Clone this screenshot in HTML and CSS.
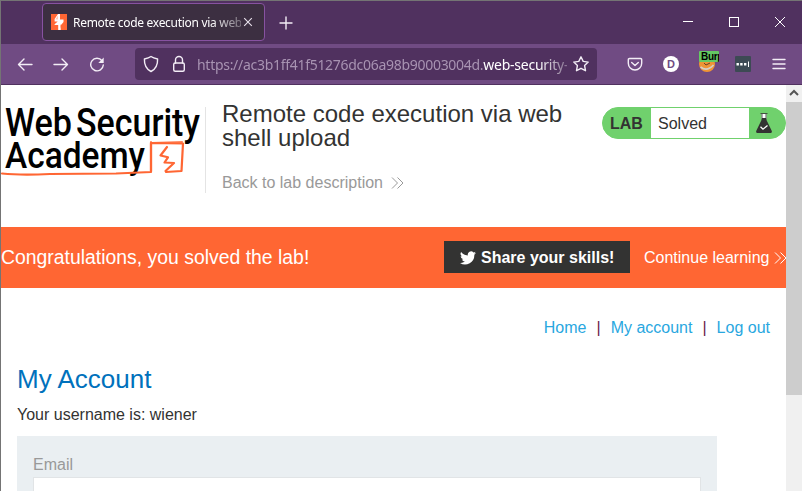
FILE: index.html
```html
<!DOCTYPE html>
<html lang="en">
<head>
<meta charset="utf-8">
<title>Remote code execution via web shell upload</title>
<link rel="stylesheet" href="styles.css">
</head>
<body>
<div class="window">
  <header class="tabbar">
    <div class="tab">
      <svg class="favicon" viewBox="0 0 16 16"><path fill="#f63" d="M0 0h16v16H0z"/><path fill="#fff" d="M7 0h2v5.500h3.500V8L9.700 11.400V16H7.200v-5H3.600v-.700L6.700 7.500H3.600V5z"/><path fill="#f63" d="M7 1.500v4H4.300zM9 14.500v-4h2.700z" opacity=".35"/></svg>
      <span class="tab-title">Remote code execution via web</span>
      <svg class="tab-close" viewBox="0 0 10 10"><path d="M1.200 1.200l7.600 7.600M8.800 1.200L1.200 8.800"/></svg>
    </div>
    <svg class="new-tab line" viewBox="0 0 14 14"><path d="M7 1v12M1 7h12"/></svg>
    <div class="window-buttons">
      <svg class="crisp" viewBox="0 0 12 12"><path d="M1 5.500h10"/></svg>
      <svg class="crisp" viewBox="0 0 12 12"><path d="M1.500 1.500h9v9h-9z"/></svg>
      <svg viewBox="0 0 12 12"><path d="M1 1l10 10M11 1L1 11"/></svg>
    </div>
  </header>
  <nav class="toolbar">
    <div class="nav-buttons">
      <svg class="line" viewBox="0 0 16 16"><path d="M15 8.500H1.500M7 3L1.500 8.500 7 14"/></svg>
      <svg class="line" viewBox="0 0 16 16"><path d="M1 8.500h13.500M9 3l5.500 5.500L9 14"/></svg>
      <svg class="line" viewBox="0 0 16 16"><path d="M13 4.700A6.300 6.300 0 1 0 14.300 9"/><path class="solid" d="M14.700 1.500V7H9.300z"/></svg>
    </div>
    <div class="urlbar">
      <svg class="shield line" viewBox="0 0 16 18"><path d="M8 1.500C6 3 4 3.500 1.400 4 1.200 9.500 3 14 8 16.500 13 14 14.800 9.500 14.600 4 12 3.500 10 3 8 1.500z"/></svg>
      <svg class="lock line" viewBox="0 0 14 18"><rect x="1.700" y="8" width="10.600" height="8.300" rx="1.500"/><path d="M3.500 8V5a3.500 3.500 0 0 1 7 0v3"/></svg>
      <span class="url">https://ac3b1ff41f51276dc06a98b90003004d.<b>web-security-</b></span>
      <svg class="star line" viewBox="0 0 18 18"><path d="M9 1.800l2.200 4.600 5 .700-3.600 3.500.900 5.100L9 13.300l-4.500 2.400.900-5.100L1.800 7.100l5-.700z"/></svg>
    </div>
    <div class="extensions">
      <svg class="line" viewBox="0 0 16 16"><path d="M2.500 2.500h11a1.200 1.200 0 0 1 1.200 1.200v3.600a6.700 6.700 0 0 1-13.400 0V3.700a1.200 1.200 0 0 1 1.200-1.200z"/><path d="M4.700 6.500L8 9.500l3.300-3"/></svg>
      <span class="profile">D</span>
      <span class="burp"><svg viewBox="0 0 16 16"><circle cx="8" cy="8" r="8" fill="#ef9435"/><path d="M1.500 11Q8 16 14.500 9" fill="none" stroke="#d5cec7" stroke-width="1.800"/><path d="M5 7l2 2 4-2" fill="none" stroke="#694026"/></svg><span class="badge">Burp</span></span>
      <svg class="password" viewBox="0 0 16 16"><rect width="16" height="16" rx="1" fill="#3d4a54"/><path fill="#fff" d="M1.500 7h2.400v2.400H1.500zM5.200 7h2.400v2.400H5.200zM9 7h2.400v2.400H9zM13 5.500h1v5.500h-1z"/></svg>
      <svg class="line" viewBox="0 0 16 16"><path d="M2 3.500h12M2 8h12M2 12.500h12"/></svg>
    </div>
  </nav>
  <div class="viewport">
    <main class="page">
      <section class="lab-header">
        <svg class="logo" viewBox="0 0 200 84" role="img" aria-label="Web Security Academy">
          <g class="logo-text">
            <text class="logo-top" x="4" y="33.700" textLength="67" lengthAdjust="spacingAndGlyphs">Web</text>
            <text class="logo-top" x="75" y="33.700" textLength="124" lengthAdjust="spacingAndGlyphs">Security</text>
            <text x="4" y="65.700" textLength="140" lengthAdjust="spacingAndGlyphs">Academy</text>
          </g>
          <g class="logo-line"><path d="M1 71.500Q20 73.500 49 72L115 71.500 150 70V41L182 41.500 180.500 69 165 70"/><path d="M150 40v29M151 41l30-1" opacity=".8"/><path d="M166 45L159.500 53.500l7.500 1.800-3.500 5.200 9.500 .500-8.500 8"/></g>
        </svg>
        <div class="lab-title">
          <h1>Remote code execution via web<br>shell upload</h1>
          <a>Back to lab description
            <svg class="chevrons" viewBox="0 0 13 12"><path d="M1 .500L6.500 6 1 11.500M6.500.500L12 6l-5.500 5.500"/></svg></a>
        </div>
        <div class="lab-status">
          <b>LAB</b><span>Solved</span>
          <svg viewBox="0 0 18 22"><path fill="#fff" d="M6.500 2h5v5h-5z"/><path d="M5.500 1.500h7M7 2v4M11 2v4" fill="none" stroke="#333" stroke-width=".8"/><path fill="#333332" d="M6.500 6h5v2l5.300 11q.400 2-1.300 2h-13Q.800 21 1.200 19L6.500 8z"/><path d="M5.500 14.700l2.500 2.500 4.500-3.700" fill="none" stroke="#fff" stroke-width="1.300"/></svg>
        </div>
      </section>
      <section class="banner">
        <p>Congratulations, you solved the lab!</p>
        <div class="share"><svg viewBox="0 0 24 20"><path fill="#fff" d="M24 2.400a10 10 0 0 1-2.800.800A5 5 0 0 0 23.300.500a10 10 0 0 1-3.100 1.200 4.900 4.900 0 0 0-8.400 4.500A14 14 0 0 1 1.700 1a4.900 4.900 0 0 0 1.500 6.600A5 5 0 0 1 1 7a4.900 4.900 0 0 0 3.900 4.900 5 5 0 0 1-2.200.100 4.900 4.900 0 0 0 4.600 3.400A10 10 0 0 1 0 17.400 14 14 0 0 0 21.500 5z"/></svg><span>Share your skills!</span></div>
        <a><span>Continue learning</span><svg class="chevrons" viewBox="0 0 13 12"><path d="M1 .500L6.500 6 1 11.500M6.500.500L12 6l-5.500 5.500"/></svg></a>
      </section>
      <section class="account">
        <nav class="links"><a>Home</a><i>|</i><a>My account</a><i>|</i><a>Log out</a></nav>
        <h2>My Account</h2>
        <p>Your username is: wiener</p>
        <form><label for="email">Email</label><input id="email" type="text"></form>
      </section>
    </main>
    <aside class="scrollbar"><svg viewBox="0 0 16 17"><path d="M4 10l4-4 4 4" fill="none" stroke="#555" stroke-width="2"/></svg><div class="thumb"></div></aside>
  </div>
</div>
</body>
</html>
```
FILE: styles.css
```css
* { box-sizing: border-box; }
body { margin: 0; overflow: hidden; }
h1, h2, p { margin: 0; font-weight: 400; }
svg { display: block; flex: none; }
.window {
  width: 802px; height: 491px; overflow: hidden;
  display: flex; flex-direction: column;
  border: 1px solid #747474; border-width: 1px 0 0 1px;
  background: #fff; color: #333332;
  font-family: "Liberation Sans", Arial, sans-serif; font-size: 16px;
}
.line { fill: none; stroke: #f3edf6; stroke-width: 1.4; stroke-linecap: round; stroke-linejoin: round; }
.solid { fill: #f3edf6; stroke: none; }

.tabbar { height: 43px; flex: none; display: flex; align-items: center; background: #50315f; padding-left: 41px; }
.tab {
  width: 223px; height: 38px; margin-bottom: 1px; padding: 0 11px 0 8px;
  display: flex; align-items: center;
  background: #3c2f41; border: 1px solid #8752a1; border-radius: 4px;
}
.favicon { width: 16px; height: 16px; }
.tab-title {
  width: 169px; margin: 2px 0 0 6px; overflow: hidden; white-space: nowrap;
  font: 12px/20px "Noto Sans", "Open Sans", sans-serif; letter-spacing: -0.3px; color: #fff;
  -webkit-mask-image: linear-gradient(to right, #000 82%, rgba(0,0,0,.3)); mask-image: linear-gradient(to right, #000 82%, rgba(0,0,0,.3));
}
.tab-close { width: 10px; height: 10px; margin-left: 2px; stroke: #e9e2ed; stroke-width: 1.1; }
.new-tab { width: 14px; height: 14px; margin-left: 14px; }
.window-buttons { display: flex; gap: 34px; margin: 0 16px 1px auto; }
.window-buttons svg { width: 12px; height: 12px; fill: none; stroke: #fff; stroke-width: 1; }
.crisp { shape-rendering: crispEdges; }

.toolbar { height: 41px; flex: none; display: flex; align-items: center; background: #704b83; border-bottom: 1px solid #50315f; padding-left: 16px; }
.nav-buttons { display: flex; gap: 20px; }
.nav-buttons svg { width: 16px; height: 16px; }
.urlbar { width: 462px; height: 32px; margin-left: 30px; padding: 0 7px 0 8px; display: flex; align-items: center; background: #50315f; border-radius: 4px; }
.shield { width: 16px; height: 18px; }
.lock { width: 14px; height: 18px; margin-left: 13px; }
.url {
  width: 370px; margin: 2px 0 0 11px; overflow: hidden; white-space: nowrap;
  font: 14px/24px "Noto Sans", "Open Sans", sans-serif; letter-spacing: -0.29px; color: #a893b2;
  -webkit-mask-image: linear-gradient(to right, #000 92%, rgba(0,0,0,.3)); mask-image: linear-gradient(to right, #000 92%, rgba(0,0,0,.3));
}
.url b { font-weight: 400; color: #fff; letter-spacing: -0.25px; }
.star { width: 18px; height: 18px; margin-left: 5px; }
.extensions { display: flex; gap: 20px; margin: 0 15px 0 auto; }
.extensions svg { width: 16px; height: 16px; }
.profile { width: 16px; height: 16px; border-radius: 50%; background: #fff; color: #704b83; font: bold 11px/16px "Liberation Sans", sans-serif; text-align: center; }
.burp { position: relative; width: 16px; height: 16px; }
.badge { position: absolute; left: 0; top: -5px; width: 20px; height: 11px; overflow: hidden; border-radius: 1px; background: #65c963; color: #000; padding-left: 2px; font: bold 10px/11px "Liberation Sans", sans-serif; letter-spacing: -0.3px; }

.viewport { display: flex; flex: 1; min-height: 0; }
.page { width: 785px; overflow: hidden; }
.lab-header { height: 142px; padding-top: 22px; display: flex; align-items: flex-start; }
.logo { width: 200px; height: 84px; margin: -5px 4px 0 0; overflow: visible; }
.logo-text { font: 500 36px "Roboto", sans-serif; fill: #000; }
.logo-top { font-size: 38px; }
.logo-line { fill: none; stroke: #f63; stroke-width: 2.2; stroke-linejoin: round; stroke-linecap: round; }
.lab-title { width: 397px; height: 86px; border-left: 1px solid #e4e4e4; padding-left: 16px; display: flex; flex-direction: column; justify-content: space-between; }
.lab-title h1 { font-size: 24px; line-height: 24px; margin-top: -5px; white-space: nowrap; }
.lab-title a { display: flex; align-items: center; gap: 8px; color: #999; line-height: 20px; }
.chevrons { width: 13px; height: 12px; fill: none; stroke: currentColor; stroke-width: 1; }
.lab-status { width: 184px; height: 32px; display: flex; align-items: center; overflow: hidden; border: 1px solid #70d16d; border-radius: 16px; background: #70d16d; }
.lab-status b { width: 48px; padding-left: 7px; line-height: 30px; padding-top: 2px; }
.lab-status span { width: 98px; height: 30px; padding-left: 7px; line-height: 32px; background: #fff; }
.lab-status svg { width: 18px; height: 22px; margin-left: 6px; }

.banner { height: 61px; display: flex; align-items: center; background: #f63; color: #fff; white-space: nowrap; }
.banner p { width: 443px; flex: none; font-size: 19.4px; }
.share { width: 186px; height: 32px; flex: none; margin-bottom: 1px; padding: 2px 0 0 16px; display: flex; align-items: center; gap: 5px; background: #333332; font-weight: 700; }
.share svg { width: 16px; height: 14px; }
.banner a { flex: none; margin-left: 14px; display: flex; align-items: center; gap: 5px; }
.banner a, .share { line-height: 20px; }

.account { padding: 30px 16px 0; }
.links { display: flex; justify-content: flex-end; gap: 10px; color: #29a7df; line-height: 20px; }
.links i { font-style: normal; color: #6d2345; }
.account h2 { margin-top: 26px; font-size: 26px; line-height: 30px; color: #0071bc; }
.account p { margin-top: 11px; line-height: 20px; }
.account form { width: 700px; height: 120px; margin-top: 11px; padding: 19px 16px; background: #eaeff2; }
.account label { display: block; color: #999; line-height: 20px; }
.account input { display: block; width: 668px; height: 34px; margin-top: 2px; border: 1px solid #e1e4e6; background: #fff; }

.scrollbar { width: 16px; background: #f0f0f0; }
.scrollbar svg { width: 16px; height: 17px; }
.thumb { height: 293px; background: #cdcdcd; }
```
